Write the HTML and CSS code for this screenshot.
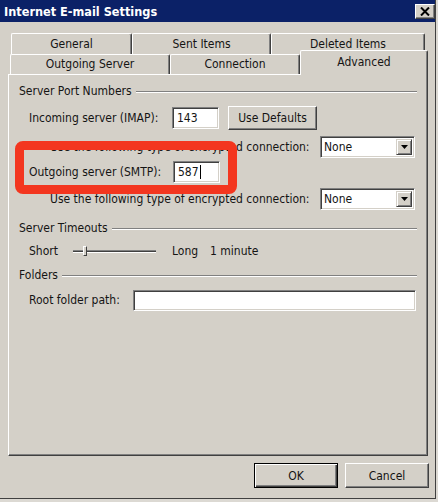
FILE: index.html
```html
<!DOCTYPE html>
<html lang="en">
<head>
<meta charset="utf-8">
<title>Internet E-mail Settings</title>
<link rel="stylesheet" href="styles.css">
</head>
<body>
<div class="window">
  <div class="titlebar">
    <span class="title">Internet E-mail Settings</span>
    <span class="close-btn">
      <svg width="10" height="9" viewBox="0 0 10 9"><path d="M1 0.5 L9 8.5 M9 0.5 L1 8.5" stroke="#000" stroke-width="2"/></svg>
    </span>
  </div>

  <div class="tabs">
    <div class="tab-row back">
      <div class="tab w-general">General</div>
      <div class="tab w-sent">Sent Items</div>
      <div class="tab w-deleted">Deleted Items</div>
    </div>
    <div class="tab-row front">
      <div class="tab w-outgoing">Outgoing Server</div>
      <div class="tab w-connection">Connection</div>
      <div class="tab w-advanced active">Advanced</div>
    </div>
  </div>

  <div class="panel">
    <div class="group-head h-ports"><span>Server Port Numbers</span><span class="rule"></span></div>

    <div class="row r-imap">
      <span class="label l-server">Incoming server (IMAP):</span>
      <span class="field f-port">143</span>
      <span class="button b-defaults">Use Defaults</span>
    </div>

    <div class="row sub r-enc1">
      <span class="label">Use the following type of encrypted connection:</span>
      <span class="select"><span class="select-text">None</span><span class="drop"><svg width="7" height="4" viewBox="0 0 7 4"><path d="M0 0 H7 L3.5 4 Z" fill="#000"/></svg></span></span>
    </div>

    <div class="row r-smtp">
      <span class="label l-server">Outgoing server (SMTP):</span>
      <span class="field f-port f-smtp">587<span class="caret"></span></span>
    </div>

    <div class="row sub r-enc2">
      <span class="label">Use the following type of encrypted connection:</span>
      <span class="select"><span class="select-text">None</span><span class="drop"><svg width="7" height="4" viewBox="0 0 7 4"><path d="M0 0 H7 L3.5 4 Z" fill="#000"/></svg></span></span>
    </div>

    <div class="group-head h-timeouts"><span>Server Timeouts</span><span class="rule"></span></div>

    <div class="row r-slider">
      <span class="label l-short">Short</span>
      <span class="slider"><span class="track"></span><span class="thumb"></span></span>
      <span class="label l-long">Long</span>
      <span class="label">1 minute</span>
    </div>

    <div class="group-head h-folders"><span>Folders</span><span class="rule"></span></div>

    <div class="row r-root">
      <span class="label l-root">Root folder path:</span>
      <span class="field f-root"></span>
    </div>
  </div>

  <div class="actions">
    <span class="button b-dialog default">OK</span>
    <span class="button b-dialog">Cancel</span>
  </div>

  <div class="highlight"></div>
</div>
</body>
</html>
```

FILE: styles.css
```css
* { box-sizing: border-box; }

html, body {
  margin: 0;
  padding: 0;
}

body {
  width: 438px;
  height: 502px;
  background: #dcd9d3;
  font-family: "DejaVu Sans Condensed", "DejaVu Sans", sans-serif;
  font-stretch: condensed;
  font-size: 12px;
  color: #141414;
}

.window {
  position: relative;
  width: 436px;
  height: 499px;
  background: #d4d0c8;
  border-right: 1px solid #404040;
  border-bottom: 1px solid #404040;
  display: flex;
  flex-direction: column;
}

/* ---------- title bar ---------- */
.titlebar {
  height: 22px;
  background: #0b2167;
  display: flex;
  align-items: center;
  justify-content: space-between;
  padding: 0 0 0 4px;
}

.title {
  color: #fff;
  font-weight: bold;
  font-size: 12.6px;
}

.close-btn {
  width: 20px;
  height: 15px;
  margin-top: 1px;
  background: #d4d0c8;
  border: 1px solid;
  border-color: #fff #404040 #404040 #fff;
  box-shadow: inset -1px -1px #808080;
  display: flex;
  align-items: center;
  justify-content: center;
}

/* ---------- tabs ---------- */
.tabs {
  margin-top: 11px;
  display: flex;
  flex-direction: column;
}

.tab-row {
  display: flex;
}

.tab-row.back {
  height: 21px;
  padding-left: 11px;
}

.tab-row.front {
  height: 20px;
  padding-left: 10px;
  align-items: flex-end;
}

.tab {
  height: 100%;
  display: flex;
  align-items: center;
  justify-content: center;
  background: #d4d0c8;
  border-top: 1px solid #fff;
  border-left: 1px solid #fff;
  border-right: 1px solid #404040;
  box-shadow: inset -1px 0 #808080;
  border-top-left-radius: 2px;
  border-top-right-radius: 2px;
  padding-bottom: 1px;
}

.w-general { width: 121px; }
.w-sent { width: 139px; }
.w-deleted { width: 154px; }
.w-outgoing { width: 160px; }
.w-connection { width: 130px; }

.tab.w-advanced {
  width: 128px;
  height: 25px;
  margin-bottom: -1px;
  position: relative;
  z-index: 1;
  align-items: flex-start;
  padding-top: 4px;
}

/* ---------- page panel ---------- */
.panel {
  margin-left: 8px;
  width: 420px;
  height: 382px;
  border-top: 1px solid #fff;
  border-left: 1px solid #fff;
  border-right: 1px solid #404040;
  border-bottom: 1px solid #404040;
  box-shadow: inset -1px -1px #808080;
  padding: 7px 10px 0 10px;
  display: flex;
  flex-direction: column;
}

.group-head {
  display: flex;
  align-items: center;
  gap: 4px;
  height: 18px;
}

.rule {
  flex: 1;
  height: 2px;
  border-top: 1px solid #808080;
  border-bottom: 1px solid #fff;
  margin-top: 1px;
}

.h-timeouts { height: 32px; }
.h-folders { height: 34px; }

.row {
  display: flex;
  align-items: center;
  padding-left: 10px;
  white-space: nowrap;
}

.row.sub { padding-left: 31px; }

.r-imap { height: 35px; }
.r-enc1 { height: 23px; }
.r-smtp { height: 27px; }
.r-enc2 { height: 27px; }
.r-slider { height: 14px; }
.r-root { height: 16px; }

.label { flex: none; }
.l-server { width: 143px; }
.l-short { width: 44px; }
.l-long { width: 38px; margin-left: 16px; }
.l-root { width: 104px; }

/* sunken white edit box */
.field {
  height: 22px;
  background: #fff;
  border: 1px solid;
  border-color: #808080 #fff #fff #808080;
  box-shadow: inset 1px 1px #404040, inset -1px -1px #d4d0c8;
  display: flex;
  align-items: center;
  padding-left: 4px;
}

.f-port { width: 47px; }
.f-smtp { margin-left: 1px; }
.f-root { width: 283px; height: 21px; }

.caret {
  width: 1px;
  height: 14px;
  background: #000;
  margin-left: 1px;
}

/* raised push button */
.button {
  display: flex;
  align-items: center;
  justify-content: center;
  background: #d4d0c8;
  border: 1px solid;
  border-color: #fff #404040 #404040 #fff;
  box-shadow: inset -1px -1px #808080;
}

.b-defaults {
  width: 89px;
  height: 24px;
  margin-left: 9px;
}

/* combo box */
.select {
  margin-left: auto;
  margin-right: 2px;
  width: 95px;
  height: 22px;
  background: #fff;
  border: 1px solid;
  border-color: #808080 #fff #fff #808080;
  box-shadow: inset 1px 1px #404040, inset -1px -1px #d4d0c8;
  display: flex;
  align-items: center;
  padding: 2px;
}

.select-text {
  flex: 1;
  padding-left: 1px;
}

.drop {
  width: 16px;
  height: 16px;
  background: #d4d0c8;
  border: 1px solid;
  border-color: #d4d0c8 #404040 #404040 #d4d0c8;
  box-shadow: inset 1px 1px #fff, inset -1px -1px #808080;
  display: flex;
  align-items: center;
  justify-content: center;
}

/* trackbar */
.slider {
  width: 83px;
  height: 12px;
  display: flex;
  align-items: center;
  position: relative;
}

.track {
  flex: 1;
  height: 3px;
  border-top: 1px solid #808080;
  border-bottom: 1px solid #fff;
  background: #404040;
}

.thumb {
  position: absolute;
  left: 10px;
  top: 1px;
  width: 4px;
  height: 10px;
  background: #d4d0c8;
  border: 1px solid;
  border-color: #fff #404040 #404040 #fff;
}

/* dialog buttons */
.actions {
  display: flex;
  justify-content: flex-end;
  gap: 7px;
  margin-top: 7px;
  padding-right: 6px;
}

.b-dialog {
  width: 84px;
  height: 25px;
}

.b-dialog.default {
  border: 1px solid #000;
  box-shadow: inset 1px 1px #fff, inset -1px -1px #404040, inset -2px -2px #808080;
}

/* red annotation frame drawn over the dialog */
.highlight {
  position: absolute;
  left: 15px;
  top: 141px;
  width: 222px;
  height: 53px;
  border: 9px solid #f3361f;
  border-radius: 8px;
}
```
